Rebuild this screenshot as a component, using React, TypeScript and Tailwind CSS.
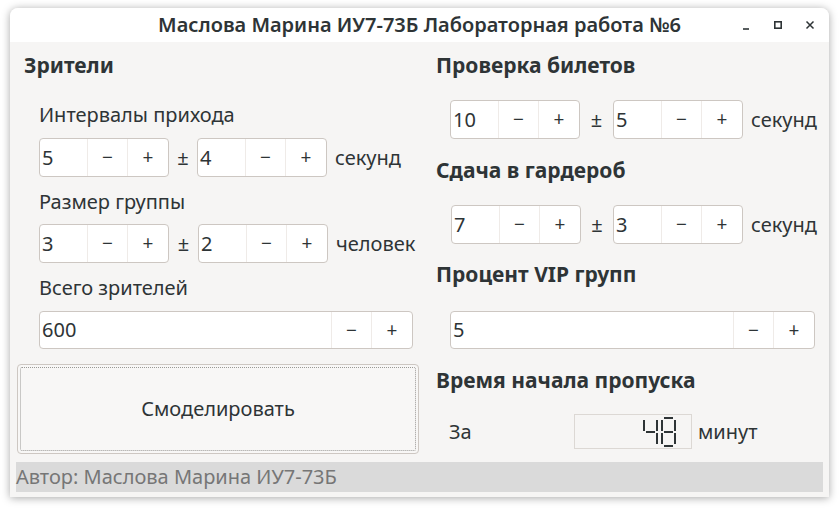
import React from "react";

const font = { fontFamily: '"Noto Sans", "DejaVu Sans", sans-serif' };

type SpinProps = { value: string; width: number };

function SpinBox({ value, width }: SpinProps) {
  return (
    <div
      className="flex h-full shrink-0 items-stretch rounded-[4px] border border-[#cdc7c2] bg-white text-[#2e3436]"
      style={{ width }}
    >
      <div className="flex flex-1 items-center pl-[2px] text-[20px] leading-none">{value}</div>
      <div className="flex w-[40px] items-center justify-center border-l border-[#efebe8] text-[19px]">−</div>
      <div className="flex w-[41px] items-center justify-center border-l border-[#efebe8] text-[19px]">+</div>
    </div>
  );
}

function PairRow({
  a,
  b,
  unit,
  pm,
}: {
  a: string;
  b: string;
  unit: string;
  pm: string;
}) {
  return (
    <div className="flex h-[39px] items-center">
      <SpinBox value={a} width={130} />
      <div className={`flex shrink-0 ${pm} justify-center text-[20px] text-[#2e3436]`}>±</div>
      <SpinBox value={b} width={130} />
      <span className="ml-[8px] whitespace-nowrap text-[20px] text-[#2e3436]">{unit}</span>
    </div>
  );
}

const segs: Record<string, string> = {
  a: "M3 0h9v2H3z",
  b: "M13 3h2v11h-2z",
  c: "M13 16h2v11h-2z",
  d: "M3 28h9v2H3z",
  e: "M0 16h2v11H0z",
  f: "M0 3h2v11H0z",
  g: "M3 14h9v2H3z",
};

const digitMap: Record<string, string> = {
  "4": "bcfg",
  "8": "abcdefg",
};

function Digit({ d }: { d: string }) {
  return (
    <svg width="15" height="30" viewBox="0 0 15 30" className="text-[#2e3436]">
      {digitMap[d].split("").map((s) => (
        <path key={s} d={segs[s]} fill="currentColor" />
      ))}
    </svg>
  );
}

export default function App() {
  return (
    <div className="h-[508px] w-[839px] bg-white pl-[10px] pt-[8px]" style={font}>
      <div className="flex h-[489px] w-[819px] flex-col rounded-t-[8px] bg-[#f6f5f4] shadow-[0_1px_9px_rgba(0,0,0,0.35)]">
        {/* title bar */}
        <div className="relative flex h-[34px] items-center justify-center rounded-t-[8px] bg-white">
          <span className="text-[20px] font-semibold leading-none text-[#2e3436]">
            Маслова Марина ИУ7-73Б Лабораторная работа №6
          </span>
          <div className="absolute right-[12px] top-0 flex h-full items-center gap-[18px] text-[#2e3436]">
            <svg width="14" height="14" viewBox="0 0 14 14">
              <path d="M4 11h6" stroke="currentColor" strokeWidth="1.6" />
            </svg>
            <svg width="14" height="14" viewBox="0 0 14 14">
              <rect x="3.8" y="3.8" width="6.4" height="6.4" fill="none" stroke="currentColor" strokeWidth="1.6" />
            </svg>
            <svg width="14" height="14" viewBox="0 0 14 14">
              <path d="M3.5 3.5l7 7M10.5 3.5l-7 7" stroke="currentColor" strokeWidth="1.5" />
            </svg>
          </div>
        </div>

        {/* content */}
        <div className="flex flex-1 pl-[7px] text-[#2e3436]">
          {/* left column */}
          <div className="flex w-[402px] flex-col">
            <div className="ml-[7px] mt-[11px] h-[24px] text-[21px] font-bold leading-[24px]">Зрители</div>
            <div className="ml-[22px] mt-[26px] h-[24px] text-[20px] leading-[24px]">Интервалы прихода</div>
            <div className="ml-[22px] mt-[11px]">
              <PairRow a="5" b="4" unit="секунд" pm="w-[28px]" />
            </div>
            <div className="ml-[22px] mt-[13px] h-[24px] text-[20px] leading-[24px]">Размер группы</div>
            <div className="ml-[22px] mt-[10px]">
              <PairRow a="3" b="2" unit="человек" pm="w-[29px]" />
            </div>
            <div className="ml-[22px] mt-[13px] h-[24px] text-[20px] leading-[24px]">Всего зрителей</div>
            <div className="ml-[22px] mt-[11px] h-[38px]">
              <SpinBox value="600" width={374} />
            </div>
            <button className="relative mt-[15px] h-[90px] w-[402px] rounded-[4px] border border-[#cdc7c2] bg-[#f8f7f6] text-[20px] text-[#2e3436]">
              <span className="absolute inset-[2px] rounded-[2px] border border-dotted border-[#9a9996]" />
              <span className="relative">Смоделировать</span>
            </button>
          </div>

          {/* right column */}
          <div className="ml-[17px] flex w-[379px] flex-col">
            <div className="mt-[11px] h-[24px] text-[21px] font-bold leading-[24px]">Проверка билетов</div>
            <div className="ml-[14px] mt-[23px]">
              <PairRow a="10" b="5" unit="секунд" pm="w-[33px]" />
            </div>
            <div className="mt-[19px] h-[24px] text-[21px] font-bold leading-[24px]">Сдача в гардероб</div>
            <div className="ml-[15px] mt-[23px]">
              <PairRow a="7" b="3" unit="секунд" pm="w-[32px]" />
            </div>
            <div className="mt-[18px] h-[24px] text-[21px] font-bold leading-[24px]">Процент VIP групп</div>
            <div className="ml-[14px] mt-[25px] h-[38px]">
              <SpinBox value="5" width={365} />
            </div>
            <div className="mt-[19px] h-[24px] text-[21px] font-bold leading-[24px]">Время начала пропуска</div>
            <div className="ml-[13px] mt-[22px] flex h-[35px] items-center">
              <span className="w-[125px] text-[20px]">За</span>
              <div className="flex h-full w-[118px] items-center justify-end gap-[3px] border border-[#dcd8d4] pr-[15px]">
                <Digit d="4" />
                <Digit d="8" />
              </div>
              <span className="ml-[6px] text-[20px]">минут</span>
            </div>
          </div>
        </div>

        {/* footer */}
        <div className="mx-[6px] mb-[5px] flex h-[30px] items-center bg-[#dadada] text-[20px] text-[#767676]">
          Автор: Маслова Марина ИУ7-73Б
        </div>
      </div>
    </div>
  );
}
